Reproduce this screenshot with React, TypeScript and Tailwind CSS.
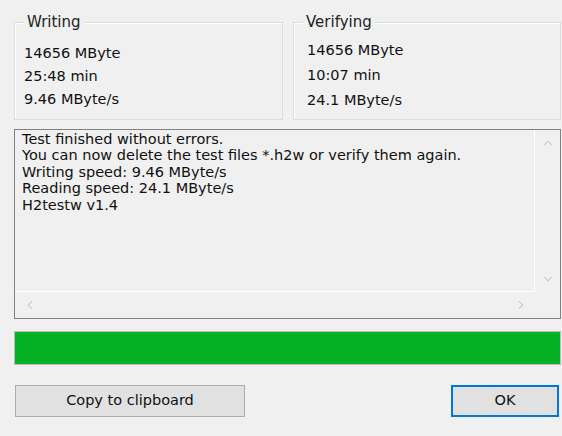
import { ChevronUp, ChevronDown, ChevronLeft, ChevronRight } from "lucide-react";

const writing = ["14656 MByte", "25:48 min", "9.46 MByte/s"];
const verifying = ["14656 MByte", "10:07 min", "24.1 MByte/s"];

const log = [
  "Test finished without errors.",
  "You can now delete the test files *.h2w or verify them again.",
  "Writing speed: 9.46 MByte/s",
  "Reading speed: 24.1 MByte/s",
  "H2testw v1.4",
];

function GroupBox({ title, lines, pad }: { title: string; lines: string[]; pad: string }) {
  return (
    <div className="relative h-[98px] border border-[#dcdcdc] shadow-[inset_1px_1px_0_#ffffff]">
      <span className="absolute -top-[10px] left-[9px] bg-[#f0f0f0] px-[3px] text-[15px] leading-[18px] text-[#222]">
        {title}
      </span>
      <div className={pad}>
        {lines.map((l) => (
          <div key={l}>{l}</div>
        ))}
      </div>
    </div>
  );
}

export default function App() {
  return (
    <div
      className="w-[562px] h-[436px] overflow-hidden bg-[#f0f0f0] pl-[14px] pt-[22px] text-[#111]"
      style={{ fontFamily: '"DejaVu Sans", Verdana, sans-serif' }}
    >
      <div className="grid grid-cols-[269px_268px] gap-x-[10px]">
        <GroupBox title="Writing" lines={writing} pad="pl-[9px] pt-[19px] text-[14.5px] leading-[23px]" />
        <GroupBox title="Verifying" lines={verifying} pad="pl-[13px] pt-[15px] text-[14.5px] leading-[25px]" />
      </div>

      <div className="mt-[9px] flex h-[190px] w-[547px] flex-col border border-[#828282]">
        <div className="flex flex-1">
          <div className="flex-1 border-r border-b border-white pl-[7px] pt-[1px] text-[14.5px] leading-[16.4px]">
            {log.map((l) => (
              <div key={l}>{l}</div>
            ))}
          </div>
          <div className="flex w-[25px] flex-col items-center justify-between py-[6px] text-[#c2c2c2]">
            <ChevronUp size={14} strokeWidth={1.75} />
            <ChevronDown size={14} strokeWidth={1.75} />
          </div>
        </div>
        <div className="flex h-[26px] items-center justify-between pl-[8px] pr-[32px] text-[#c2c2c2]">
          <ChevronLeft size={14} strokeWidth={1.75} />
          <ChevronRight size={14} strokeWidth={1.75} />
        </div>
      </div>

      <div className="mt-[12px] h-[34px] w-[547px] border border-[#bcbcbc] bg-[#06b025]" />

      <div className="mt-[20px] flex w-[545px] justify-between pl-px">
        <button className="h-[32px] w-[230px] border border-[#adadad] bg-[#e1e1e1] text-[14.5px] text-[#111]">
          Copy to clipboard
        </button>
        <button className="h-[32px] w-[108px] border-2 border-[#0078d7] bg-[#e1e1e1] text-[14.5px] text-[#111]">
          OK
        </button>
      </div>
    </div>
  );
}
